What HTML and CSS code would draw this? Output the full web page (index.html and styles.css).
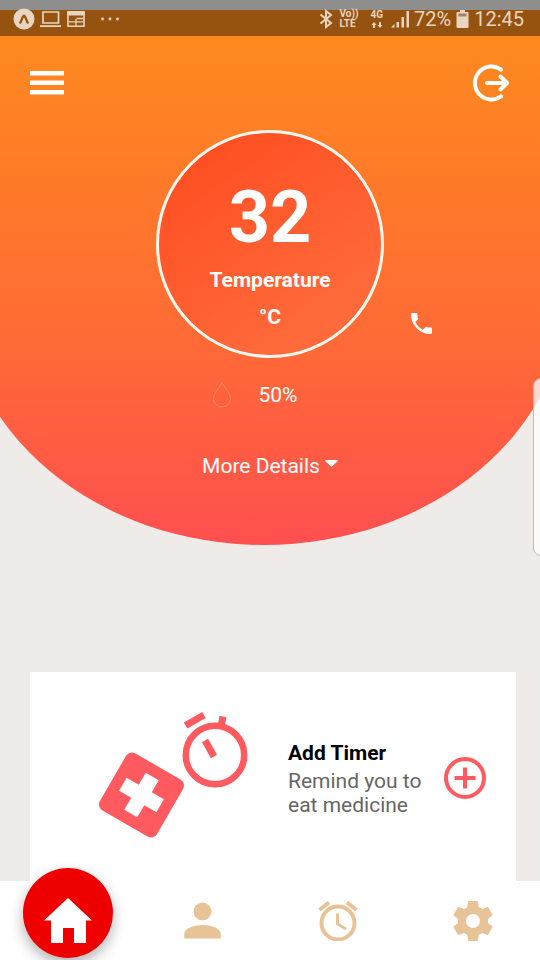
FILE: index.html
```html
<!DOCTYPE html>
<html lang="en">
<head>
<meta charset="utf-8">
<meta name="viewport" content="width=device-width, initial-scale=1">
<title>Home</title>
<link rel="stylesheet" href="styles.css">
</head>
<body>
<div class="screen">
  <header class="status">
    <div class="status-group">
      <svg width="22" height="22" viewBox="0 0 22 22"><circle cx="11" cy="11" r="10.500" fill="#e8d5c1"/><path d="M7 15.500 10 8.500q1-2 2 0L15 15.500" fill="none" stroke="#95530f" stroke-width="2.200"/></svg>
      <svg width="22" height="18" viewBox="0 0 22 18" fill="none" stroke="#e8d5c1" stroke-width="1.700"><path d="M3 2h15.500v11H3zM0 16.200h21"/></svg>
      <svg width="18" height="18" viewBox="0 0 18 18"><path d="M1 2.500h16v13.700H1z" fill="none" stroke="#e8d5c1" stroke-width="1.600"/><path d="M.3 1h17.400v4.500H.3z" fill="#e8d5c1"/><path d="M9.500 8.500H16M2 11.800h6.500M9.500 11.800H16M9 9v7" stroke="#e8d5c1" stroke-width="1.300"/></svg>
      <svg class="dots" width="20" height="6" viewBox="0 0 20 6" fill="#e8d5c1"><circle cx="2.500" cy="3" r="1.400"/><circle cx="10" cy="3" r="1.400"/><circle cx="17.500" cy="3" r="1.400"/></svg>
    </div>
    <div class="status-group">
      <svg width="14" height="20" viewBox="0 0 14 20" fill="none" stroke="#e8d5c1" stroke-width="2"><path d="M1.500 5.500 12 14l-5 4V2l5 4-10.500 8.500"/></svg>
      <span class="net">Vo))<br>LTE</span>
      <span class="net data">4G<svg width="12" height="6" viewBox="0 0 12 6" fill="#e8d5c1"><path d="M3 0 5.500 3H4v3H2V3H.5zM8 0h2v3h1.500L9 6 6.500 3H8z"/></svg></span>
      <svg width="18" height="18" viewBox="0 0 18 18" fill="#e8d5c1"><path d="M0 17.500 3.500 14v3.500zM5.500 12H8v5.500H5.500zM10.500 7H13v10.500h-2.500zM15.500 1H18v16.500h-2.500z"/></svg>
      <span class="status-text">72%</span>
      <svg width="13" height="20" viewBox="0 0 13 20"><path d="M4 1h5v2h2.500q1 0 1 1v14q0 1-1 1h-10q-1 0-1-1V4q0-1 1-1H4z" fill="#e8d5c1"/><path d="M2.500 4.500h8v3h-8z" fill="#a98158"/></svg>
      <span class="status-text">12:45</span>
    </div>
  </header>

  <main class="content">
    <section class="hero">
      <div class="toolbar">
        <button class="icon-button" aria-label="Menu"><svg width="34" height="24" viewBox="0 0 34 24" fill="#fff"><path d="M0 0h34v4.500H0zM0 9.500h34V14H0zM0 19h34v4.500H0z"/></svg></button>
        <button class="icon-button" aria-label="Log out"><svg width="38" height="38" viewBox="0 0 38 38" fill="none" stroke="#fff" stroke-width="4" stroke-linecap="round" stroke-linejoin="round"><path d="M29 5.600A16.500 16.500 0 1 0 29 32.400"/><path d="M15 19h20M28.500 12.500 35 19l-6.500 6.500"/></svg></button>
      </div>
      <div class="dial">
        <strong class="reading">32</strong>
        <span class="label">Temperature</span>
        <span class="label">°C</span>
      </div>
      <div class="humidity">
        <svg width="20" height="28" viewBox="0 0 20 28" fill="none" stroke="#ff8a60" stroke-width="1"><path d="M10 1.500C8 6 1.500 12 1.500 18a8.500 8 0 0 0 17 0C18.500 12 12 6 10 1.500z"/></svg>
        <span>50%</span>
      </div>
      <button class="more">More Details <svg width="13" height="8" viewBox="0 0 13 8" fill="#fff"><path d="M.5 0h12q.7.500 0 1.200L7.300 6.300q-.8.700-1.600 0L.5 1.200Q-.2.500.5 0z"/></svg></button>
      <a class="call" href="#call" aria-label="Call"><svg width="21" height="21" viewBox="3 3 18 18" fill="#fff"><path d="M6.620 10.790c1.440 2.830 3.760 5.140 6.590 6.590l2.200-2.200c.27-.27.670-.36 1.020-.24 1.120.37 2.330.57 3.570.57.550 0 1 .45 1 1V20c0 .55-.45 1-1 1-9.390 0-17-7.610-17-17 0-.55.450-1 1-1h3.500c.55 0 1 .45 1 1 0 1.250.2 2.450.57 3.570.11.35.03.740-.25 1.020l-2.200 2.200z"/></svg></a>
    </section>

    <section class="card">
      <svg width="150" height="128" viewBox="0 0 150 128" fill="#ff5a5f">
        <g transform="translate(42.500 84) rotate(30)"><rect x="-33" y="-33" width="66" height="66" rx="7"/><path d="M-7.500-21.500h15v14h14v15h-14v14h-15v-14h-14v-15h14z" fill="#fff"/></g>
        <circle cx="116" cy="44" r="29.200" fill="none" stroke="#ff5a5f" stroke-width="6.500"/>
        <path d="M106 29.500 115 45.500M122 16 124 5.500" stroke="#ff5a5f" stroke-width="7"/>
        <path d="M86.500 14.500 105 4" stroke="#ff5a5f" stroke-width="7"/>
      </svg>
      <div class="card-text">
        <h2>Add Timer</h2>
        <p>Remind you to eat medicine</p>
      </div>
      <button class="icon-button" aria-label="Add timer"><svg width="42" height="42" viewBox="0 0 42 42" fill="none" stroke="#ff5a5f" stroke-width="4"><circle cx="21" cy="21" r="19"/><path d="M21 10.500v21M10.500 21h21"/></svg></button>
    </section>
  </main>

  <div class="edge-handle"></div>

  <nav class="tabs">
    <a class="home" href="#home" aria-label="Home"><svg width="48" height="46" viewBox="0 0 48 46" fill="#fff"><path d="M24 0 48 22.500h-6V45H30V30H19v15H7V22.500H0z"/></svg></a>
    <a href="#profile" aria-label="Profile"><svg width="37" height="37" viewBox="0 0 37 37" fill="#e8c398"><circle cx="18.500" cy="9.500" r="9"/><path d="M.2 36.500V32C.2 26 11 23 18.500 23s18.300 3 18.300 9v4.500z"/></svg></a>
    <a href="#timers" aria-label="Timers"><svg width="40" height="40" viewBox="0 0 40 40" fill="none" stroke="#e8c398" stroke-width="4"><circle cx="20" cy="22" r="16.500"/><path d="M19.500 12.500V23l8.500 5" stroke-width="3"/><path d="M1.500 9 11 1.500M29 1.500 38.500 9"/></svg></a>
    <a href="#settings" aria-label="Settings"><svg width="40" height="40" viewBox="2 2 20 20" fill="#e8c398"><path d="M19.430 12.980c.04-.32.070-.64.070-.98s-.03-.66-.07-.98l2.110-1.650c.19-.15.240-.42.120-.64l-2-3.460c-.12-.22-.39-.3-.61-.22l-2.490 1c-.52-.4-1.080-.73-1.690-.98l-.38-2.650C14.460 2.180 14.250 2 14 2h-4c-.25 0-.46.180-.49.420l-.38 2.650c-.61.250-1.170.59-1.690.98l-2.490-1c-.23-.09-.49 0-.61.220l-2 3.460c-.13.220-.07.490.12.640l2.110 1.650c-.04.320-.07.650-.07.980s.03.660.07.980l-2.110 1.650c-.19.150-.24.420-.12.640l2 3.460c.12.220.39.300.61.220l2.490-1c.52.400 1.080.73 1.690.98l.38 2.650c.03.240.24.420.49.420h4c.25 0 .46-.18.490-.42l.38-2.650c.61-.25 1.170-.59 1.690-.98l2.490 1c.23.090.49 0 .61-.22l2-3.460c.12-.22.070-.49-.12-.64zM12 15.500a3.500 3.500 0 1 1 0-7 3.500 3.500 0 0 1 0 7z"/></svg></a>
  </nav>
</div>
</body>
</html>
```
FILE: styles.css
```css
* {
  box-sizing: border-box;
}

body {
  margin: 0;
  background: #efebe8;
  font-family: Roboto, "Liberation Sans", sans-serif;
  font-size: 21px;
  line-height: 24px;
}

svg {
  display: block;
  flex: none;
}

button {
  border: 0;
  padding: 0;
  background: none;
  color: inherit;
  font: inherit;
}

.screen {
  position: relative;
  display: flex;
  flex-direction: column;
  min-height: 100vh;
  overflow: hidden;
}

.status {
  display: flex;
  justify-content: space-between;
  height: 36px;
  padding: 1px 16px 0 13px;
  background: linear-gradient(#8e8e8c 10px, #95530f 10px);
  color: #e8d5c1;
}

.status-group {
  display: flex;
  align-items: center;
  gap: 5px;
}

.dots {
  margin-left: 10px;
}

.status-text {
  font-size: 20px;
}

.net {
  margin-left: 2px;
  font-size: 10px;
  line-height: 10px;
  font-weight: 700;
}

.data {
  display: flex;
  flex-direction: column;
  align-items: center;
  gap: 2px;
  margin: 0 3px 0 7px;
}

.content {
  display: flex;
  flex: 1;
  flex-direction: column;
}

.hero {
  position: relative;
  display: flex;
  flex-direction: column;
  align-items: center;
  padding: 28px 30px 67px;
  color: #fff;
}

.hero::before {
  content: "";
  position: absolute;
  inset: 0 -28px 0 -40px;
  z-index: -1;
  border-radius: 0 0 50% 50% / 0 0 50% 50%;
  background: linear-gradient(#fe891e, #ff6a36 60%, #ff4f50);
}

.toolbar {
  display: flex;
  align-self: stretch;
  align-items: center;
  justify-content: space-between;
}

.dial {
  display: flex;
  flex-direction: column;
  align-items: center;
  gap: 13px;
  width: 228px;
  height: 228px;
  margin-top: 28px;
  padding-top: 48px;
  border: 3px solid #fff8f0;
  border-radius: 50%;
  background: linear-gradient(145deg, #ff4e22 10%, #ff6a3a 80%);
}

.reading {
  font-size: 72px;
  line-height: 74px;
}

.label {
  font-weight: 700;
}

.humidity {
  display: flex;
  align-items: center;
  gap: 27px;
  margin-top: 23px;
  padding-right: 31px;
}

.more {
  display: flex;
  gap: 5px;
  margin-top: 45px;
}

.more svg {
  margin-top: 6px;
}

.call {
  position: absolute;
  top: 277px;
  right: 108px;
}

.card {
  display: flex;
  flex: 1;
  align-items: flex-start;
  margin: 127px 24px 0 30px;
  padding: 39px 30px 0 69px;
  background: #fff;
}

.card-text {
  flex: 1;
  margin: 30px 12px 0 39px;
}

.card h2,
.card p {
  margin: 0;
  font-size: inherit;
}

.card h2 {
  color: #000;
}

.card p {
  margin-top: 4px;
  color: #666;
}

.card .icon-button {
  margin-top: 46px;
}

.edge-handle {
  position: absolute;
  top: 378px;
  right: -9px;
  width: 16px;
  height: 178px;
  border: 1px solid #bdbdb8;
  border-radius: 8px;
  background: rgba(255, 255, 255, 0.75);
}

.tabs {
  display: grid;
  grid-template-columns: repeat(4, 1fr);
  place-items: center;
  height: 79px;
  background: #fff;
}

.home {
  display: grid;
  place-items: center;
  width: 90px;
  height: 90px;
  margin-top: -16px;
  padding-top: 16px;
  border-radius: 50%;
  background: #ee0000;
  box-shadow: 0 6px 14px rgba(0, 0, 0, 0.3);
}
```
